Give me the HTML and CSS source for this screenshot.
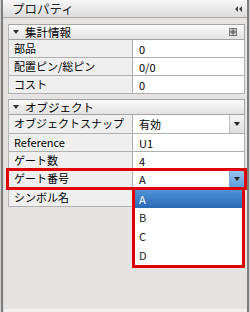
FILE: index.html
```html
<!DOCTYPE html>
<html>
  <head>
    <meta charset="utf-8">
    <title>プロパティ</title>
    <link rel="stylesheet" href="styles.css">
  </head>
  <body>
    <div class="panel">
      <div class="titlebar">
        <span class="title">プロパティ</span>
        <svg class="collapse" width="8" height="6" viewBox="0 0 8 6"><path d="M3 0 L0 3 L3 6 Z M7 0 L4 3 L7 6 Z" fill="#444"/></svg>
      </div>
      <div class="content">
        <div class="section">
          <div class="sec-head">
            <span class="tri"></span><span class="sec-name">集計情報</span>
            <svg class="pin" width="8" height="8" viewBox="0 0 8 8"><rect x="0.5" y="0.5" width="7" height="7" fill="#d8d8d8" stroke="#777"/><rect x="2" y="2" width="4" height="4" fill="#999"/><path d="M0 4 H8 M4 0 V8" stroke="#666" stroke-width="1"/></svg>
          </div>
          <div class="row"><div class="label">部品</div><div class="value">0</div></div>
          <div class="row"><div class="label">配置ピン/総ピン</div><div class="value">0/0</div></div>
          <div class="row"><div class="label">コスト</div><div class="value">0</div></div>
        </div>
        <div class="section">
          <div class="sec-head">
            <span class="tri"></span><span class="sec-name">オブジェクト</span>
          </div>
          <div class="row combo"><div class="label">オブジェクトスナップ</div><div class="value"><span class="val-text">有効</span><span class="btn"><span class="arrow"></span></span></div></div>
          <div class="row"><div class="label">Reference</div><div class="value">U1</div></div>
          <div class="row"><div class="label">ゲート数</div><div class="value">4</div></div>
          <div class="row combo hl"><div class="label">ゲート番号</div><div class="value"><span class="val-text">A</span><span class="btn active"><span class="arrow"></span></span></div></div>
          <div class="row"><div class="label">シンボル名</div><div class="value"></div></div>
        </div>
      </div>
      <ul class="dropdown">
        <li class="selected">A</li>
        <li>B</li>
        <li>C</li>
        <li>D</li>
      </ul>
    </div>
  </body>
</html>
```

FILE: styles.css
```css
* {
    margin: 0;
    padding: 0;
    box-sizing: border-box;
}
body {
    font: 11px "Noto Sans CJK JP", "Liberation Sans", sans-serif;
    color: #000;
}
.panel {
    position: relative;
    width: 250px;
    height: 312px;
    background: #e5e4e2;
    box-shadow: inset 1px 0 #cfcfcf, inset 3px 0 #7f7f7f, inset 4px 0 #d6d6d6,
                inset -1px 0 #cfcfcf, inset -3px 0 #7f7f7f, inset 0 -3px #f0f0f0;
    padding: 0 3px;
}
.titlebar {
    display: flex;
    align-items: center;
    justify-content: space-between;
    height: 18px;
    padding: 0 4px 0 9px;
    background: linear-gradient(#f8f8f8, #dcdcdc);
    border-bottom: 1px solid #a9a9a9;
}
.title {
    font-size: 12.5px;
    color: #222;
}
.content {
    padding: 6px 2px 0 5px;
}
.section {
    margin-bottom: 5px;
    border-left: 1px solid #b4b4b4;
}
.sec-head {
    display: flex;
    align-items: center;
    height: 16px;
    padding: 0 7px 0 4px;
    background: linear-gradient(#fbfbfb, #e2e2e2);
    border: 1px solid #a4a4a4;
    border-left: 0;
    font-size: 11.5px;
}
.tri {
    width: 0;
    height: 0;
    border-left: 3px solid transparent;
    border-right: 3px solid transparent;
    border-top: 4px solid #333;
    margin-right: 6px;
}
.sec-name {
    flex: 1;
}
.row {
    display: flex;
    height: 18px;
    border-bottom: 1px solid #b0b0b0;
    border-right: 1px solid #b0b0b0;
}
.row.combo {
    height: 19px;
}
.label {
    width: 124px;
    padding-left: 5px;
    background: #efefef;
    border-right: 1px solid #b0b0b0;
    line-height: 17px;
    white-space: nowrap;
}
.value {
    flex: 1;
    display: flex;
    align-items: center;
    padding-left: 6px;
    background: #fff;
}
.val-text {
    flex: 1;
}
.btn {
    width: 15px;
    height: 100%;
    display: flex;
    align-items: center;
    justify-content: center;
    background: linear-gradient(#f6f6f6, #dedede);
    border-left: 1px solid #c0c0c0;
}
.btn.active {
    background: linear-gradient(#9cc6ee, #5b9bd8);
    border-left-color: #7aa8d8;
}
.arrow {
    width: 0;
    height: 0;
    border-left: 3px solid transparent;
    border-right: 3px solid transparent;
    border-top: 4px solid #222;
}
.row.hl {
    position: relative;
}
.row.hl::after {
    content: "";
    position: absolute;
    left: -3px;
    right: -3px;
    top: -2px;
    bottom: -2px;
    border: 3px solid #e00000;
}
.dropdown {
    position: absolute;
    left: 132px;
    top: 187px;
    width: 113px;
    height: 81px;
    list-style: none;
    background: #fff;
    border: 3px solid #e00000;
}
.dropdown li {
    height: 19px;
    line-height: 19px;
    padding-left: 4px;
    color: #222;
}
.dropdown li.selected {
    height: 18px;
    line-height: 18px;
    background: linear-gradient(#4f93d8, #2c69b4);
    color: #fff;
}
```
